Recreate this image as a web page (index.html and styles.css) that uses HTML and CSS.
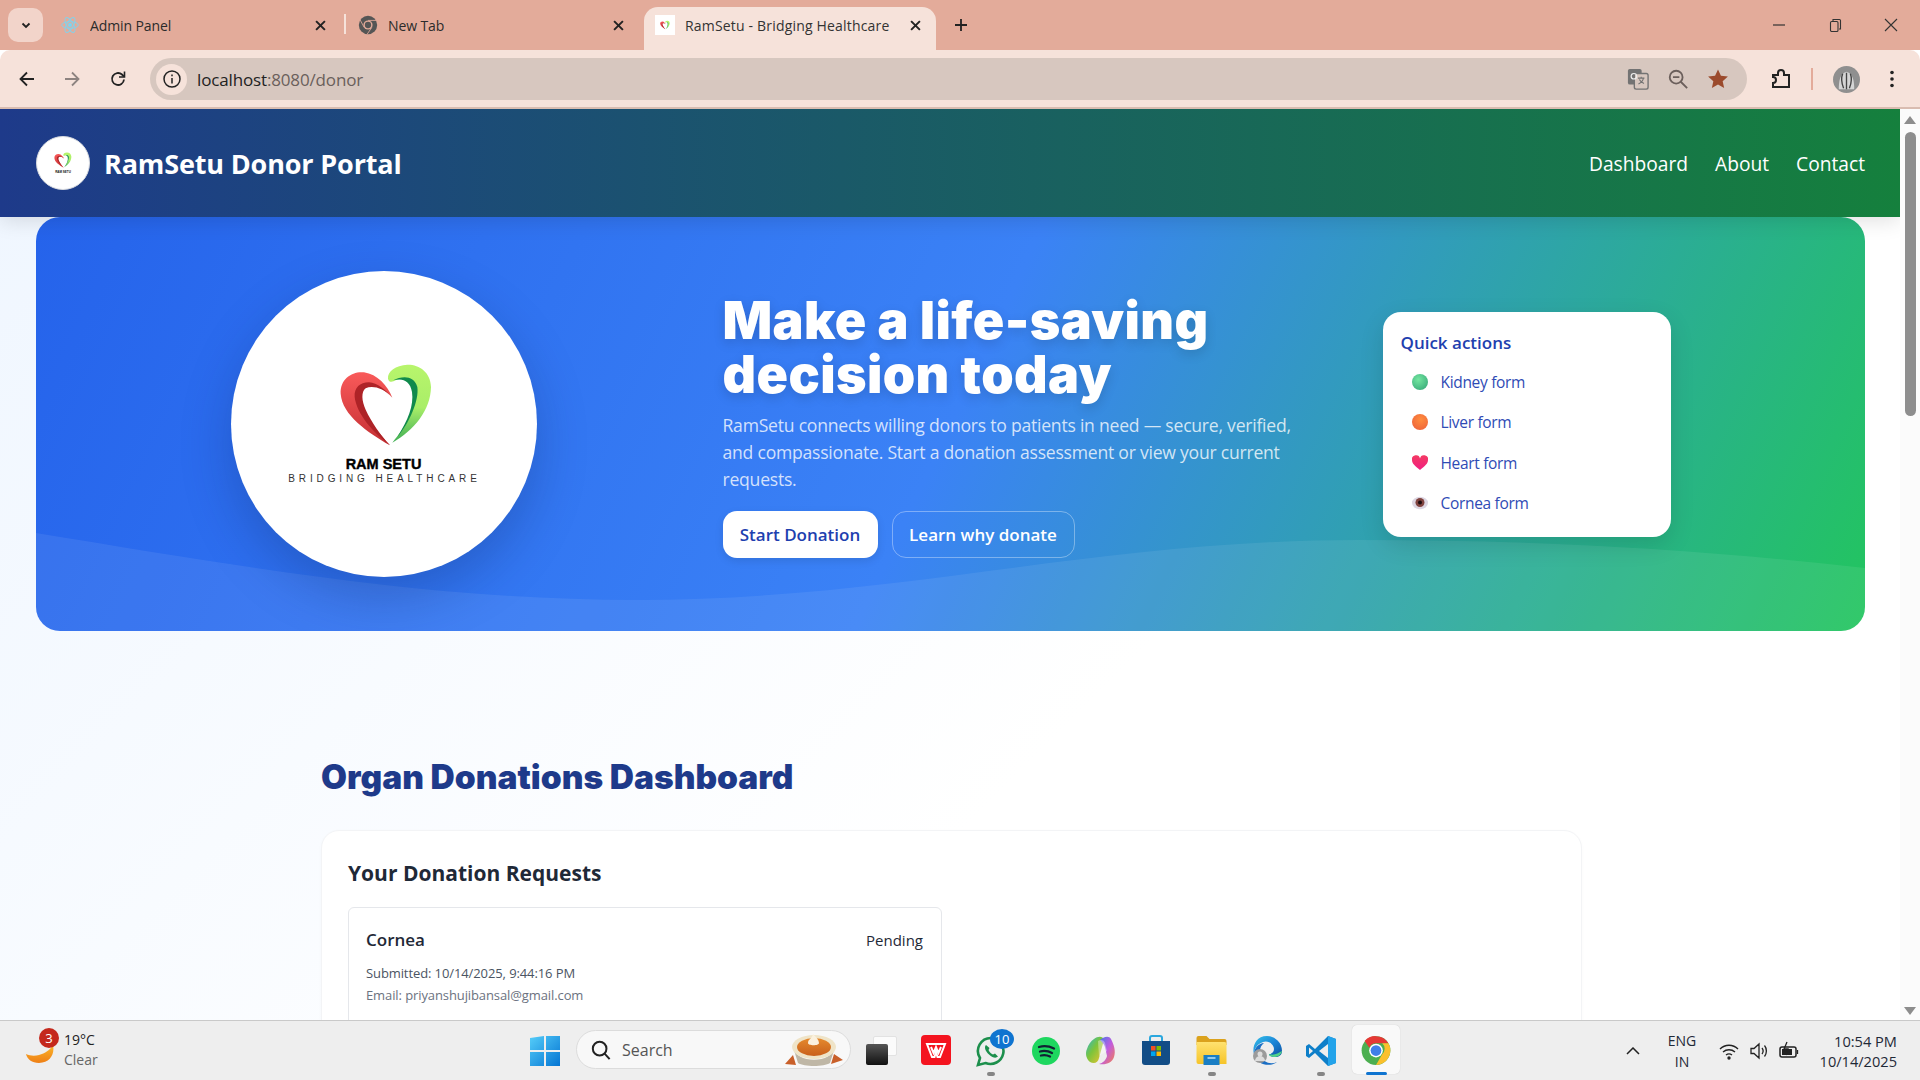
FILE: index.html
```html
<!DOCTYPE html>
<html lang="en">
<head>
<meta charset="utf-8">
<title>RamSetu - Bridging Healthcare</title>
<link rel="stylesheet" href="styles.css">
</head>
<body>
<svg class="defs" width="0" height="0" aria-hidden="true">
  <defs>
    <linearGradient id="gRed" x1="0" y1="0" x2="0" y2="1"><stop offset="0" stop-color="#f95a5a"/><stop offset="1" stop-color="#c42f33"/></linearGradient>
    <linearGradient id="gGreen" x1="0" y1="0" x2="0" y2="1"><stop offset="0" stop-color="#b8f56c"/><stop offset=".55" stop-color="#a9ee68"/><stop offset="1" stop-color="#3fae55"/></linearGradient>
    <linearGradient id="gWin" x1="0" y1="0" x2="1" y2="1"><stop offset="0" stop-color="#55cdf9"/><stop offset="1" stop-color="#0475d3"/></linearGradient>
    <linearGradient id="gMoon" x1="0" y1="0" x2="0" y2="1"><stop offset="0" stop-color="#fbb62a"/><stop offset="1" stop-color="#ee7f16"/></linearGradient>
    <linearGradient id="gCop" x1="0" y1="0" x2="1" y2="1"><stop offset="0" stop-color="#27b7d6"/><stop offset=".45" stop-color="#7cc43b"/><stop offset="1" stop-color="#f3c32f"/></linearGradient>
    <linearGradient id="gCop2" x1="0" y1="0" x2="1" y2="1"><stop offset="0" stop-color="#3f7bea"/><stop offset=".5" stop-color="#c05be0"/><stop offset="1" stop-color="#f4824a"/></linearGradient>
    <linearGradient id="gEdge" x1="0" y1="0" x2="1" y2="1"><stop offset="0" stop-color="#35c1e8"/><stop offset=".5" stop-color="#1b86d8"/><stop offset="1" stop-color="#0c4fa0"/></linearGradient>
    <linearGradient id="gFolder" x1="0" y1="0" x2="0" y2="1"><stop offset="0" stop-color="#ffe270"/><stop offset="1" stop-color="#f6c429"/></linearGradient>
    <radialGradient id="gKid" cx=".4" cy=".35" r=".8"><stop offset="0" stop-color="#74e6a0"/><stop offset="1" stop-color="#36a878"/></radialGradient>
    <radialGradient id="gLiv" cx=".55" cy=".35" r=".8"><stop offset="0" stop-color="#ff8d3e"/><stop offset="1" stop-color="#ec5f3a"/></radialGradient>
    <linearGradient id="gHeart" x1="0" y1="0" x2="0" y2="1"><stop offset="0" stop-color="#f43a63"/><stop offset="1" stop-color="#f01f82"/></linearGradient>
    <linearGradient id="gPie" x1="0" y1="0" x2="0" y2="1"><stop offset="0" stop-color="#e58a2e"/><stop offset="1" stop-color="#c9601c"/></linearGradient>
    <symbol id="heartLogo" viewBox="415 335 285 255">
      <path fill="url(#gRed)" d="M568 585C500 545 425 495 420 430C418 385 455 362 490 366C530 372 560 405 575 442C548 412 515 398 490 408C470 418 476 455 490 480C510 520 540 555 568 585Z"/>
      <path fill="#ae2327" d="M568 585C515 545 468 490 462 440C460 412 478 396 505 396C530 398 555 418 575 442C548 412 515 405 495 414C481 424 483 452 495 478C512 515 540 555 568 585Z"/>
      <path fill="url(#gGreen)" d="M575 577C640 540 690 480 691 410C690 365 655 342 620 343C585 345 560 362 562 385C565 397 575 396 585 390C610 380 640 385 645 420C650 470 615 530 575 577Z"/>
      <path fill="#108a4c" d="M578 390C605 376 640 375 650 410C656 450 625 520 590 560C622 510 640 465 634 425C628 390 605 382 578 390Z"/>
    </symbol>
    <symbol id="chromeIcon" viewBox="0 0 48 48">
      <circle cx="24" cy="24" r="23" fill="#4caf50"/>
      <path fill="#e53935" d="M24 1a23 23 0 0 1 19.900 11.500H24a11.500 11.500 0 0 0-10.600 7L5.800 8.600A23 23 0 0 1 24 1Z"/>
      <path fill="#fbc02d" d="M43.900 12.500A23 23 0 0 1 24 47l9.900-17.200a11.500 11.500 0 0 0 0-17.300Z"/>
      <circle cx="24" cy="24" r="11" fill="#fff"/><circle cx="24" cy="24" r="8.600" fill="#3f7fe8"/>
    </symbol>
  </defs>
</svg>

<div class="screen">
  <header class="tabstrip">
    <button class="tabs-down"><svg width="12" height="12" viewBox="0 0 12 12"><path d="M2.500 4.500 6 8l3.500-3.500" fill="none" stroke="#222" stroke-width="1.800"/></svg></button>
    <div class="tab tab-first">
      <svg class="favicon" viewBox="0 0 24 24" fill="none" stroke="#7fd3ee" stroke-width="1.100"><circle cx="12" cy="12" r="2" fill="#7fd3ee"/><ellipse cx="12" cy="12" rx="10" ry="4"/><ellipse cx="12" cy="12" rx="10" ry="4" transform="rotate(60 12 12)"/><ellipse cx="12" cy="12" rx="10" ry="4" transform="rotate(120 12 12)"/></svg>
      <span class="tab-title">Admin Panel</span>
      <svg class="tab-x" viewBox="0 0 10 10"><path d="M1 1l8 8M9 1l-8 8"/></svg>
    </div>
    <span class="tab-sep"></span>
    <div class="tab tab-second">
      <svg class="favicon" viewBox="0 0 24 24"><circle cx="12" cy="12" r="11" fill="#555"/><circle cx="12" cy="12" r="5.500" fill="#e3ab9a"/><circle cx="12" cy="12" r="3.800" fill="#555"/><path d="M12 6.500h10M7.500 15 2.600 6M16.500 15 11 23" stroke="#e3ab9a" stroke-width="1"/></svg>
      <span class="tab-title">New Tab</span>
      <svg class="tab-x" viewBox="0 0 10 10"><path d="M1 1l8 8M9 1l-8 8"/></svg>
    </div>
    <div class="tab tab-active">
      <span class="favicon-box"><svg width="10" height="10"><use href="#heartLogo"/></svg></span>
      <span class="tab-title tab-title-fade">RamSetu - Bridging Healthcare</span>
      <svg class="tab-x" viewBox="0 0 10 10"><path d="M1 1l8 8M9 1l-8 8"/></svg>
    </div>
    <svg class="new-tab" viewBox="0 0 14 14"><path d="M7 1v12M1 7h12" stroke="#222" stroke-width="1.800"/></svg>
    <div class="window-controls">
      <svg viewBox="0 0 14 14"><path d="M1 7h12" stroke="#333" stroke-width="1.200"/></svg>
      <svg viewBox="0 0 14 14" fill="none" stroke="#333" stroke-width="1.100"><rect x="2.500" y="3.500" width="7.500" height="10" rx="1.200"/><path d="M5 3V1.500h6.500a1 1 0 0 1 1 1V11H11"/></svg>
      <svg viewBox="0 0 14 14"><path d="M1 1l12 12M13 1 1 13" stroke="#333" stroke-width="1.100"/></svg>
    </div>
  </header>

  <nav class="toolbar">
    <svg class="tool-ic" viewBox="0 0 20 20" fill="none" stroke="#222" stroke-width="1.800"><path d="M17 10H4M10 3.500 3.500 10l6.500 6.500"/></svg>
    <svg class="tool-ic tool-forward" viewBox="0 0 20 20" fill="none" stroke="#8d8380" stroke-width="1.800"><path d="M3 10h13M10 3.500l6.500 6.500-6.500 6.500"/></svg>
    <svg class="tool-ic tool-reload" viewBox="0 0 20 20" fill="none" stroke="#222" stroke-width="1.800"><path d="M16 10.500a6 6 0 1 1-2-5L16 7.500"/><path d="M16.500 2.500v5.500H11" stroke-width="1.600"/></svg>
    <div class="omnibox">
      <span class="info-chip"><svg width="20" height="20" viewBox="0 0 20 20" fill="none" stroke="#222" stroke-width="1.500"><circle cx="10" cy="10" r="8"/><path d="M10 9v5.500M10 5.500v1.700"/></svg></span>
      <span class="url"><span class="url-host">localhost</span>:8080/donor</span>
      <svg class="omni-ic" viewBox="0 0 24 24"><rect x="1" y="1" width="15" height="17" rx="2" fill="#737373"/><rect x="8" y="6" width="15" height="17" rx="2" fill="#d7c7bf" stroke="#737373" stroke-width="1.500"/><path d="M12 11h7M15.500 9.500v1.500M18 11c-.7 3-2.500 5-5.500 6.500M13.500 12.500c1 2 3 3.500 5 4.500" fill="none" stroke="#737373" stroke-width="1.200"/><circle cx="7.500" cy="9" r="3" fill="none" stroke="#eee" stroke-width="1.300"/></svg>
      <svg class="omni-ic" viewBox="0 0 24 24" fill="none" stroke="#6b5f5b" stroke-width="2"><circle cx="10" cy="10" r="7"/><path d="M15 15l7 7M6.500 10h7"/></svg>
      <svg class="omni-ic" viewBox="0 0 24 24"><path fill="#9b4a2c" d="m12 1.500 3.200 7 7.600.8-5.700 5.100 1.600 7.500L12 18.100l-6.700 3.800 1.600-7.500L1.200 9.300l7.600-.8Z"/></svg>
    </div>
    <svg class="tool-ic tool-ext" viewBox="0 0 24 24" fill="none" stroke="#222" stroke-width="2"><path d="M4 7h5V5a3 3 0 0 1 6 0v2h5v12H4v-4a3 3 0 0 0 0-6Z" transform="translate(0 1)"/></svg>
    <span class="tool-sep"></span>
    <svg class="avatar" viewBox="0 0 28 28"><circle cx="14" cy="14" r="14" fill="#8f8f8f"/><path d="M6 24c0-8 1-16 8-18 7 2 8 10 8 18Z" fill="#d5d5d5"/><path d="M10 8c-2 5-1 10 1 15M14 7v17M18 8c2 5 1 10-1 15" stroke="#444" stroke-width="1.400" fill="none"/></svg>
    <svg class="dots" viewBox="0 0 4 18"><circle cx="2" cy="2.500" r="1.800"/><circle cx="2" cy="9" r="1.800"/><circle cx="2" cy="15.500" r="1.800"/></svg>
  </nav>

  <div class="viewport">
    <main class="page">
      <div class="site-header">
        <div class="brand">
          <span class="brand-logo"><svg class="brand-heart"><use href="#heartLogo"/></svg><span class="brand-tiny">RAM SETU</span></span>
          <span class="brand-name">RamSetu Donor Portal</span>
        </div>
        <div class="site-nav"><a>Dashboard</a><a>About</a><a>Contact</a></div>
      </div>

      <section class="hero">
        <svg class="hero-wave" viewBox="0 0 1829 414" preserveAspectRatio="none"><path fill="#fff" fill-opacity=".075" d="M0 316C220 352 400 383 601 383C860 383 1060 323 1322 323C1500 323 1660 332 1829 351V414H0Z"/></svg>
        <div class="hero-inner">
          <div class="hero-circle">
            <svg class="hero-heart"><use href="#heartLogo"/></svg>
            <span class="logo-name">RAM SETU</span>
            <span class="logo-tag">BRIDGING HEALTHCARE</span>
          </div>
          <div class="hero-copy">
            <h1>Make a life-saving decision today</h1>
            <p>RamSetu connects willing donors to patients in need — secure, verified, and compassionate. Start a donation assessment or view your current requests.</p>
            <div class="hero-btns"><a class="btn btn-solid">Start Donation</a><a class="btn btn-ghost">Learn why donate</a></div>
          </div>
          <aside class="quick">
            <h3>Quick actions</h3>
            <ul>
              <li><svg viewBox="0 0 16 16"><circle cx="8" cy="8" r="8" fill="url(#gKid)"/></svg>Kidney form</li>
              <li><svg viewBox="0 0 16 16"><circle cx="8" cy="8" r="8" fill="url(#gLiv)"/></svg>Liver form</li>
              <li><svg viewBox="0 0 16 16"><path fill="url(#gHeart)" d="M8 15C3 11 0 8.500 0 5a4 4 0 0 1 8-1.500A4 4 0 0 1 16 5c0 3.500-3 6-8 10Z"/></svg>Heart form</li>
              <li><svg viewBox="0 0 16 16"><ellipse cx="8" cy="8" rx="8" ry="6.200" fill="#ddd6e2"/><circle cx="8" cy="7.500" r="4.500" fill="#80433f"/><circle cx="8" cy="7.500" r="2" fill="#1c0d10"/></svg>Cornea form</li>
            </ul>
          </aside>
        </div>
      </section>

      <section class="dashboard">
        <h2>Organ Donations Dashboard</h2>
        <div class="panel">
          <h3>Your Donation Requests</h3>
          <div class="req-grid">
            <article class="req">
              <div class="req-top"><span class="req-name">Cornea</span><span class="req-status">Pending</span></div>
              <div class="req-line">Submitted: 10/14/2025, 9:44:16 PM</div>
              <div class="req-line req-mail">Email: priyanshujibansal@gmail.com</div>
            </article>
          </div>
        </div>
      </section>
    </main>
    <div class="scrollbar">
      <svg class="sb-arrow" viewBox="0 0 12 8"><path d="M6 0l6 8H0Z" fill="#8d8d8d"/></svg>
      <span class="sb-thumb"></span>
      <svg class="sb-arrow sb-down" viewBox="0 0 12 8"><path d="M6 8 0 0h12Z" fill="#8d8d8d"/></svg>
    </div>
  </div>

  <footer class="taskbar">
    <div class="weather">
      <svg class="moon" viewBox="0 0 28 18"><path fill="url(#gMoon)" d="M27 0c2 9-3 18-14 18C6 18 1 14 0 9c4 2 9 2 13 1 6-1.500 11-5 14-10Z"/></svg>
      <span class="wbadge">3</span>
      <div class="wtext"><span>19°C</span><span class="wsub">Clear</span></div>
    </div>
    <svg class="winlogo" viewBox="0 0 30 30"><path fill="url(#gWin)" d="M0 2 14 0v14H0ZM16 0h14v14H16ZM0 16h14v14H0ZM16 16h14v14H16Z"/></svg>
    <div class="search">
      <svg class="search-ic" viewBox="0 0 22 22" fill="none" stroke="#222" stroke-width="2.200"><circle cx="9.500" cy="9.500" r="7.500"/><path d="m15 15 5.500 6"/></svg>
      <span>Search</span>
      <svg class="pie" viewBox="0 0 60 36"><path d="M1 32l8-9 3 10ZM59 28l-9-6-3 10Z" fill="#c9602a"/><path d="M9 15c2 17 40 17 42 0l-5 16c-6 4-26 4-32 0Z" fill="#bfb7a6"/><ellipse cx="30" cy="15" rx="22" ry="12" fill="#efe4c8"/><ellipse cx="30" cy="15" rx="17" ry="9" fill="url(#gPie)"/><path d="M24 11c0-4 4-4 5-9 3 3 6 6 6 9 0 3-11 3-11 0Z" fill="#fbf1de"/></svg>
    </div>
    <div class="taskview"><span class="tv-back"></span><span class="tv-front"></span></div>
    <div class="apps">
      <span class="app app-wps"><svg viewBox="0 0 30 30"><rect width="30" height="30" rx="4" fill="#f4141f"/><path d="M6 9h18l-5 13h-2.500L15 17l-1.500 5H11ZM10 12l2.500 6 2.500-6 2.500 6 2.500-6" fill="none" stroke="#fff" stroke-width="2"/></svg></span>
      <span class="app app-wa"><svg viewBox="0 0 32 32"><path d="M16 3a13 13 0 0 0-11 20L3 30l7.500-2A13 13 0 1 0 16 3Z" fill="#eee" stroke="#1c8f4c" stroke-width="2.600"/><path d="M11 10c-2 2-1 6 3 9.500s7 4 9 2l-3-3-2 1c-2-1-3.500-2.500-4.500-4.500l1-2Z" fill="#1c8f4c"/></svg><span class="app-badge">10</span><i class="run-dot"></i></span>
      <span class="app app-sp"><svg viewBox="0 0 28 28"><circle cx="14" cy="14" r="14" fill="#1ed75f"/><path d="M7 10c5-1.500 10-1 15 1.500M8 14.500c4-1 8-.7 12 1.500M9 18.500c3-.7 6-.5 9 1" fill="none" stroke="#123" stroke-width="2.300" stroke-linecap="round"/></svg></span>
      <span class="app app-cop"><svg viewBox="0 0 32 32"><path d="M9 4c4-3 9-3 10 1l-5 18c-1 5-5 6-9 4-4-3-5-9-3-13 1-4 4-8 7-10Z" fill="url(#gCop)"/><path d="M15 5c3-3 9-5 11-1 3 6 5 12 3 18-2 6-8 8-15 7 4-1 7-4 8-8l-2-9c-.7-3-3-5-5-7Z" fill="url(#gCop2)"/><path d="M13 6c3-2 6-1 7 2l2 8-8 5Z" fill="#fff" fill-opacity=".35"/></svg></span>
      <span class="app app-store"><svg viewBox="0 0 30 30"><path d="M9 6V3a2 2 0 0 1 2-2h8a2 2 0 0 1 2 2v3" fill="none" stroke="#2aa7de" stroke-width="2"/><path d="M1 6h28v21a3 3 0 0 1-3 3H4a3 3 0 0 1-3-3Z" fill="#124d86"/><path fill="#f25022" d="M10 11h4.500v4.500H10Z"/><path fill="#7fba00" d="M15.500 11H20v4.500h-4.500Z"/><path fill="#00a4ef" d="M10 16.500h4.500V21H10Z"/><path fill="#ffb900" d="M15.500 16.500H20V21h-4.500Z"/></svg></span>
      <span class="app app-folder"><svg viewBox="0 0 30 30"><path d="M0 3a2 2 0 0 1 2-2h8l3 3h15a2 2 0 0 1 2 2v4H0Z" fill="#dba21d"/><path d="M0 7h28a2 2 0 0 1 2 2v20H2a2 2 0 0 1-2-2Z" fill="url(#gFolder)"/><path d="M7 20h16v10H7Z" fill="#1a7ec4"/><path d="M11 23h8" stroke="#bde3f7" stroke-width="1.500"/></svg><i class="run-dot"></i></span>
      <span class="app app-edge"><svg viewBox="0 0 32 32"><path d="M16 1a15 15 0 0 1 15 15c0 4-3 6-7 6-3 0-6-1-6-3 3 0 5-2 5-5 0-5-6-9-11-7C6 9 3 14 3 19 1 13 4 1 16 1Z" fill="url(#gEdge)"/><path d="M3 19c0-6 5-11 10-11-4 3-5 8-3 13 2 6 9 9 16 6-6 5-20 4-23-8Z" fill="#1a6ec4"/><path d="M31 16c0 2-3 6-7 6-3 0-6-1-6-3 5 2 9-1 13-3Z" fill="#4fd18a"/><circle cx="9" cy="21" r="7" fill="#9b9b9b"/><circle cx="9" cy="19" r="2.500" fill="#ddd"/><path d="M4 26a5 5 0 0 1 10 0Z" fill="#ddd"/></svg></span>
      <span class="app app-code"><svg viewBox="0 0 32 32"><path d="M23 1 10 14 4 9 1 11v10l3 2 6-5 13 13 8-3V4Z" fill="#0e7fc9"/><path d="M23 1l8 3v24l-8 3Z" fill="#23a3ea"/><path d="M23 9v14l-9-7Z" fill="#eee"/><path d="M4 12.500 8 16l-4 3.500Z" fill="#eee"/></svg><i class="run-dot"></i></span>
      <span class="app app-chrome"><svg viewBox="0 0 48 48"><use href="#chromeIcon"/></svg><i class="run-bar"></i></span>
    </div>
    <div class="tray">
      <svg class="chev" viewBox="0 0 14 8"><path d="M1 7l6-6 6 6" fill="none" stroke="#222" stroke-width="1.500"/></svg>
      <div class="lang"><span>ENG</span><span>IN</span></div>
      <svg class="tray-ic" viewBox="0 0 20 20" fill="none" stroke="#222" stroke-width="1.400"><path d="M1 8c5-5 13-5 18 0M4 11c3.500-3 8.500-3 12 0M7 14c2-1.500 4-1.500 6 0"/><circle cx="10" cy="17" r="1" fill="#222"/></svg>
      <svg class="tray-ic" viewBox="0 0 20 20" fill="none" stroke="#222" stroke-width="1.300"><path d="M2 7.500h3l5-4.500v14l-5-4.500H2ZM13 7c1.300 1.700 1.300 4.300 0 6M15.500 4.500c2.500 3 2.500 8 0 11"/></svg>
      <svg class="tray-ic" viewBox="0 0 20 20" fill="none" stroke="#222" stroke-width="1.500"><rect x="1" y="6" width="16" height="10" rx="2"/><rect x="3" y="8" width="10" height="6" fill="#222" stroke="none"/><path d="M18.500 9v4M8 1 5 8h4l-2 6" stroke-width="1.300"/></svg>
      <div class="clock"><span>10:54 PM</span><span>10/14/2025</span></div>
    </div>
  </footer>
</div>
</body>
</html>
```
FILE: styles.css
```css
* { box-sizing: border-box; }
html, body { margin: 0; height: 100%; overflow: hidden; }
body { font-family: "Open Sans", "Noto Sans", sans-serif; color: #1f2937; }
.defs { display: block; height: 0; }
h1, h2, h3, p, ul { margin: 0; padding: 0; }
.screen { display: flex; flex-direction: column; width: 1920px; height: 1080px; }

/* browser tabs */
.tabstrip { height: 50px; flex: none; display: flex; align-items: flex-start; background: #e3ab9a; padding-left: 8px; color: #2b2b2b; }
.tabs-down { width: 35px; height: 34px; margin-top: 8px; border: 0; border-radius: 10px; background: #f2d4ca; display: flex; align-items: center; justify-content: center; padding: 0; }
.tab { height: 43px; margin-top: 7px; padding-bottom: 7px; display: flex; align-items: center; font-size: 14px; letter-spacing: -.1px; }
.tab-first { width: 295px; padding-left: 17px; margin-right: 6px; }
.tab-second { width: 291px; padding-left: 5px; margin-left: 7px; }
.tab-second .tab-x { margin-right: 20px; }
.tab-sep { width: 2px; height: 20px; margin-top: 14px; background: #f6e2da; }
.tab-active { width: 292px; padding-left: 11px; background: #f6e2da; border-radius: 14px 14px 0 0; }
.tab-active .tab-x { margin-right: 15px; }
.favicon { width: 20px; height: 20px; flex: none; }
.favicon-box { width: 20px; height: 20px; background: #fff; flex: none; display: flex; align-items: center; justify-content: center; }
.tab-title { margin-left: 10px; flex: 1; white-space: nowrap; overflow: hidden; }
.tab-title-fade { color: #333; letter-spacing: .18px; }
.tab-x { width: 11px; height: 11px; flex: none; stroke: #222; stroke-width: 1.800; margin-right: 12px; margin-left: 8px; }
.new-tab { width: 14px; height: 14px; margin: 18px 0 0 18px; flex: none; }
.window-controls { margin-left: auto; display: flex; gap: 42px; padding: 18px 22px 0 0; }
.window-controls svg { width: 14px; height: 14px; }

/* toolbar */
.toolbar { height: 59px; flex: none; display: flex; align-items: center; padding: 1px 0 0 17px; background: #f6e2da; border-bottom: 2px solid #d9bcb0; border-radius: 10px 10px 0 0; }
.tool-ic { width: 20px; height: 20px; flex: none; }
.tool-forward { margin-left: 25px; }
.tool-reload { margin-left: 26px; }
.omnibox { width: 1597px; height: 42px; margin-left: 22px; border-radius: 21px; background: #d7c7bf; display: flex; align-items: center; padding: 0 18px 0 6px; }
.info-chip { width: 31px; height: 31px; flex: none; border-radius: 50%; background: #f6e2da; display: flex; align-items: center; justify-content: center; }
.url { flex: 1; margin-left: 10px; font-size: 17px; color: #6a5f5b; letter-spacing: -.15px; }
.url-host { color: #222; }
.omni-ic { width: 22px; height: 22px; flex: none; margin-left: 18px; }
.tool-ext { width: 24px; height: 24px; margin-left: 22px; }
.tool-sep { width: 2px; height: 22px; background: #e3ab9a; margin-left: 18px; }
.avatar { width: 27px; height: 27px; margin-left: 20px; flex: none; }
.dots { width: 4px; height: 18px; margin-left: 30px; fill: #222; flex: none; }

/* scrolling page */
.viewport { flex: 1; min-height: 0; display: flex; }
.page { flex: 1; min-width: 0; overflow: hidden; background: linear-gradient(135deg, #eff6ff 0%, #ffffff 60%); }
.scrollbar { width: 20px; flex: none; background: #fbfbfb; display: flex; flex-direction: column; align-items: center; padding-top: 7px; }
.sb-arrow { width: 12px; height: 8px; flex: none; }
.sb-thumb { width: 11px; height: 284px; margin-top: 8px; border-radius: 6px; background: #8d8d8d; flex: none; }
.sb-down { margin-top: auto; margin-bottom: 5px; }

.site-header { position: relative; z-index: 2; height: 108px; display: flex; align-items: center; justify-content: space-between; padding: 0 35px 0 36px; background: linear-gradient(90deg, #1e3a8a, #15803d); box-shadow: 0 4px 20px rgba(0,0,0,.12); color: #fff; }
.brand { display: flex; align-items: center; gap: 14px; }
.brand-logo { width: 54px; height: 54px; border-radius: 50%; background: #fff; border: 1px solid #d8dbe0; display: flex; flex-direction: column; align-items: center; justify-content: center; }
.brand-heart { width: 18px; height: 16px; }
.brand-tiny { font: 700 3px "Liberation Sans", sans-serif; color: #111; margin-top: 2px; }
.brand-name { font-size: 27px; font-weight: 700; letter-spacing: -.15px; line-height: 38px; padding-top: 1px; }
.site-nav { display: flex; gap: 27px; font-size: 19.200px; }

.hero { position: relative; height: 414px; margin: 0 35px 0 36px; border-radius: 24px; overflow: hidden; background: linear-gradient(115deg, #2563eb 0%, #3b82f6 50%, #22c55e 100%); }
.hero-wave { position: absolute; inset: 0; width: 100%; height: 100%; }
.hero-inner { position: relative; height: 100%; max-width: 1440px; margin: 0 auto; display: grid; grid-template-columns: 306px 580px 288px; column-gap: 186px; align-items: center; }
.hero-inner > .quick { margin-left: -106px; }
.hero-circle { width: 306px; height: 306px; border-radius: 50%; background: #fff; box-shadow: 0 20px 50px rgba(15,40,100,.28); display: flex; flex-direction: column; align-items: center; justify-content: flex-start; padding-top: 91px; color: #000; }
.hero-heart { width: 95px; height: 85px; flex: none; margin-left: 6px; }
.logo-name { font: 700 14.500px/16px "Liberation Sans", sans-serif; margin-top: 9px; -webkit-text-stroke: .4px #000; }
.logo-tag { font: 400 10px/12px "Liberation Sans", sans-serif; letter-spacing: 3.880px; margin: 1px 0 0 2px; color: #333; white-space: nowrap; }
.hero-copy { color: #fff; padding-top: 4px; }
.hero-copy h1 { font-family: Inter, "Noto Sans", sans-serif; font-size: 52px; font-weight: 900; line-height: 54px; letter-spacing: .4px; text-shadow: 0 4px 12px rgba(0,0,0,.15); }
.hero-copy p { font-size: 17.600px; line-height: 27px; margin-top: 10px; color: rgba(255,255,255,.78); letter-spacing: -.24px; }
.hero-btns { display: flex; gap: 14px; margin-top: 18px; }
.btn { height: 47px; display: flex; align-items: center; justify-content: center; font-size: 17px; font-weight: 600; border-radius: 14px; }
.btn-solid { width: 155px; background: #fff; color: #1e40af; box-shadow: 0 3px 8px rgba(0,0,0,.1); }
.btn-ghost { width: 183px; border: 1px solid rgba(255,255,255,.35); color: #fff; }
.quick { width: 288px; height: 225px; background: #fff; border-radius: 18px; padding: 19px 18px; box-shadow: 0 8px 24px rgba(0,0,0,.12); color: #1e40af; }
.quick h3 { font-size: 17px; font-weight: 600; line-height: 24px; }
.quick ul { list-style: none; margin-top: 7px; }
.quick li { height: 40.500px; display: flex; align-items: center; padding-left: 11px; font-size: 15.500px; letter-spacing: -.32px; color: #2f4bb5; }
.quick li svg { width: 16px; height: 16px; margin-right: 13px; flex: none; }

.dashboard { width: 1261px; margin-left: 321px; padding-top: 124px; }
.dashboard h2 { font-family: Inter, "Noto Sans", sans-serif; font-size: 33.500px; line-height: 44px; font-weight: 900; color: #1e3a8a; }
.panel { margin-top: 31px; background: #fff; border: 1px solid #f3f4f6; border-radius: 18px; padding: 27px 26px; box-shadow: 0 1px 4px rgba(0,0,0,.02); height: 400px; }
.panel h3 { font-size: 21px; line-height: 30px; font-weight: 700; color: #1f2937; }
.req-grid { display: grid; grid-template-columns: 594px; margin-top: 19px; }
.req { border: 1px solid #e5e7eb; border-radius: 6px; padding: 18px 18px 18px 17px; height: 200px; }
.req-top { display: flex; justify-content: space-between; align-items: center; line-height: 28px; }
.req-name { font-size: 17px; font-weight: 600; color: #1f2937; }
.req-status { font-size: 15px; color: #1f2937; }
.req-line { font-size: 13px; line-height: 22px; letter-spacing: -.1px; color: #4b5563; }
.req-top + .req-line { margin-top: 8px; }
.req-mail { color: #6b7280; }

/* windows taskbar */
.taskbar { height: 60px; flex: none; display: flex; align-items: flex-start; background: #eeeeee; border-top: 1px solid #c9c9c9; position: relative; z-index: 3; }
.weather { width: 530px; flex: none; height: 59px; display: flex; position: relative; padding-left: 26px; }
.moon { width: 28px; height: 18px; margin-top: 24px; flex: none; }
.wbadge { position: absolute; left: 39px; top: 7px; width: 20px; height: 20px; border-radius: 50%; background: #c4281c; color: #fff; font-size: 13px; line-height: 20px; text-align: center; }
.wtext { display: flex; flex-direction: column; margin: 9px 0 0 10px; font-size: 14px; line-height: 20px; color: #222; }
.wsub { color: #666; }
.winlogo { width: 30px; height: 30px; margin-top: 15px; flex: none; }
.search { width: 275px; height: 39px; margin: 9px 0 0 16px; flex: none; border-radius: 20px; background: #f8f8f8; border: 1px solid #dcdcdc; display: flex; align-items: center; padding: 0 6px 0 14px; font-size: 16px; color: #555; }
.search-ic { width: 20px; height: 22px; flex: none; margin-right: 11px; }
.pie { width: 60px; height: 36px; margin-left: auto; flex: none; }
.taskview { width: 31px; height: 29px; margin: 15px 0 0 15px; position: relative; flex: none; }
.tv-back { position: absolute; left: 7px; top: 0; width: 24px; height: 20px; background: rgba(255,255,255,.75); border-radius: 2px; border: 1px solid #e2e2e2; }
.tv-front { position: absolute; left: 0; top: 8px; width: 22px; height: 21px; background: linear-gradient(#555, #111); border-radius: 2px; }
.apps { display: flex; flex: none; margin-left: 24px; height: 59px; }
.app { position: relative; display: flex; justify-content: center; flex: none; }
.app svg { margin-top: 14px; flex: none; }
.app-wps { width: 30px; } .app-wps svg { width: 30px; height: 30px; }
.app-wa { width: 32px; margin-left: 24px; } .app-wa svg { width: 32px; height: 32px; }
.app-sp { width: 28px; margin-left: 25px; } .app-sp svg { width: 28px; height: 32px; }
.app-cop { width: 32px; margin-left: 25px; } .app-cop svg { width: 32px; height: 32px; }
.app-store { width: 30px; margin-left: 24px; } .app-store svg { width: 30px; height: 30px; }
.app-folder { width: 31px; margin-left: 25px; } .app-folder svg { width: 31px; height: 30px; }
.app-edge { width: 32px; margin-left: 24px; } .app-edge svg { width: 32px; height: 32px; }
.app-code { width: 32px; margin-left: 22px; } .app-code svg { width: 32px; height: 32px; }
.app-chrome { width: 48px; height: 49px; margin: 4px 0 0 15px; background: #f9f9f9; border-radius: 5px; box-shadow: 0 0 1px rgba(0,0,0,.2); } .app-chrome svg { width: 30px; height: 33px; margin-top: 9px; }
.app-badge { position: absolute; left: 15px; top: 8px; width: 24px; height: 20px; border-radius: 50%; background: #0f74d0; color: #fff; font-size: 13px; line-height: 20px; text-align: center; }
.run-dot { position: absolute; left: 50%; margin-left: -4px; top: 51px; width: 8px; height: 4px; border-radius: 2px; background: #858585; }
.run-bar { position: absolute; left: 14px; top: 47px; width: 21px; height: 3px; border-radius: 2px; background: #0f74d0; }
.tray { flex: 1; display: flex; align-items: center; height: 59px; padding-right: 23px; }
.chev { width: 14px; height: 8px; margin-left: 226px; flex: none; }
.lang { display: flex; flex-direction: column; align-items: center; font-size: 14px; line-height: 21px; margin-left: 25px; width: 34px; }
.tray-ic { width: 20px; height: 20px; flex: none; }
.lang + .tray-ic { margin-left: 20px; }
.tray-ic + .tray-ic { margin-left: 10px; }
.clock { margin-left: auto; display: flex; flex-direction: column; align-items: flex-end; font-size: 14.600px; line-height: 20px; }
a { cursor: pointer; }
```
